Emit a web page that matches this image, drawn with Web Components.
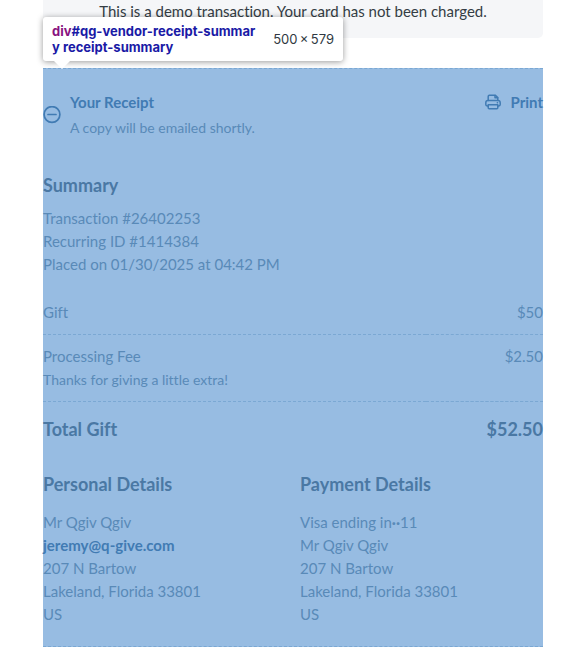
<!DOCTYPE html>
<html lang="en">
<head>
<meta charset="utf-8">
<meta name="viewport" content="width=device-width, initial-scale=1">
<title>Receipt</title>
<style>
  :root {
    --highlight: #97bce2;
    --text: #598ab8;
    --heading: #4a78a4;
    --link: #417bb3;
    --dash: #7ba8d3;
  }
  body {
    margin: 0;
    padding: 0 34px 8px 43px;
    background: #fff;
    font: 15px/23px Lato, "Liberation Sans", sans-serif;
    font-variant-ligatures: none;
    color: var(--text);
  }
</style>
</head>
<body>

<demo-notice>This is a demo transaction. Your card has not been charged.</demo-notice>

<receipt-summary>
  <inspect-tip slot="tip" tag="div" width="500" height="579">#qg-vendor-receipt-summar<br>y receipt-summary</inspect-tip>
  <receipt-header heading="Your Receipt">A copy will be emailed shortly.</receipt-header>
  <receipt-section heading="Summary">
    <div>Transaction #26402253</div>
    <div>Recurring ID #1414384</div>
    <div>Placed on 01/30/2025 at 04:42 PM</div>
  </receipt-section>
  <receipt-items></receipt-items>
  <receipt-columns>
    <receipt-section heading="Personal Details" roomy>
      <div>Mr Qgiv Qgiv</div>
      <div><receipt-link href="mailto:jeremy@q-give.com">jeremy@q-give.com</receipt-link></div>
      <div>207 N Bartow</div>
      <div>Lakeland, Florida 33801</div>
      <div>US</div>
    </receipt-section>
    <receipt-section heading="Payment Details" roomy>
      <div>Visa ending in<b>··</b>11</div>
      <div>Mr Qgiv Qgiv</div>
      <div>207 N Bartow</div>
      <div>Lakeland, Florida 33801</div>
      <div>US</div>
    </receipt-section>
  </receipt-columns>
</receipt-summary>

<script>
// Small helper: every element here is an open shadow root with static markup.
class BaseElement extends HTMLElement {
  connectedCallback() {
    if (this.shadowRoot) return;
    this.attachShadow({ mode: 'open' }).innerHTML = this.template();
  }
}

// Grey banner above the receipt
class DemoNotice extends BaseElement {
  template() {
    return `
      <style>
        :host {
          display: block;
          padding: 0 20px 15px;
          margin-bottom: 30px;
          border-radius: 0 0 5px 5px;
          background: #f5f6f8;
          color: #343d44;
          font-size: 15px;
          text-align: center;
        }
      </style>
      <slot></slot>
    `;
  }
}

// Highlighted receipt box
class ReceiptSummary extends BaseElement {
  template() {
    return `
      <style>
        :host {
          display: block;
          position: relative;
          padding: 20px 0;
          background: var(--highlight);
          border-top: 1px dashed var(--dash);
          border-bottom: 1px dashed var(--dash);
        }
      </style>
      <slot name="tip"></slot>
      <slot></slot>
    `;
  }
}

// Inspector tooltip, floats over the top left corner of the highlighted box
class InspectTip extends BaseElement {
  template() {
    return `
      <style>
        :host {
          position: absolute;
          left: 0;
          bottom: 100%;
          margin-bottom: 8px;
          width: 300px;
          box-sizing: border-box;
          display: flex;
          align-items: center;
          justify-content: space-between;
          padding: 6px 9px;
          border-radius: 3px;
          background: #fff;
          box-shadow: 0 1px 6px rgba(0, 0, 0, .4);
          font: 13px/16px Inter, "Liberation Sans", sans-serif;
          white-space: nowrap;
          color: #303942;
        }
        :host::after {
          content: '';
          position: absolute;
          top: 100%;
          left: 11px;
          border: 8px solid transparent;
          border-top-color: #fff;
          border-bottom: 0;
        }
        .node { font-weight: 700; color: #1a1aa6; }
        .tag { color: #881280; }
        .size { font-size: 13px; }
      </style>
      <span class="node"><span class="tag">${this.getAttribute('tag')}</span><slot></slot></span>
      <span class="size">${this.getAttribute('width')}&#8201;×&#8201;${this.getAttribute('height')}</span>
    `;
  }
}

// Title row with the collapse toggle and the print button
class ReceiptHeader extends BaseElement {
  template() {
    return `
      <style>
        :host {
          display: flex;
          align-items: flex-start;
          line-height: 26px;
        }
        button {
          padding: 0;
          border: 0;
          background: none;
          font: inherit;
          font-weight: 700;
          color: var(--link);
          cursor: pointer;
        }
        svg {
          display: block;
          fill: none;
          stroke: currentColor;
          stroke-linecap: round;
          stroke-linejoin: round;
        }
        .toggle { align-self: center; margin-right: 9px; }
        .text { flex: 1; }
        h2 {
          margin: 0;
          font-size: 15px;
          color: var(--link);
        }
        p { margin: 0; font-size: 14px; }
        .print {
          display: flex;
          align-items: center;
          gap: 9px;
        }
      </style>
      <button class="toggle" type="button" aria-label="Collapse receipt">
        <svg width="18" height="18" viewBox="0 0 18 18" stroke-width="1.7">
          <circle cx="9" cy="8.500" r="7.900"/>
          <path d="M5 8.500h8"/>
        </svg>
      </button>
      <div class="text">
        <h2>${this.getAttribute('heading')}</h2>
        <p><slot></slot></p>
      </div>
      <button class="print" type="button">
        <svg width="16" height="16" viewBox="0 0 16 16" stroke-width="1.5">
          <path d="M3.200 6.500V2.400q0-1.200 1.200-1.200h6l2.400 2.400v2.900"/>
          <path d="M10 1.400v2.400h2.600"/>
          <path d="M3.200 12H2.200Q.8 12 .8 10.600V8.700Q.8 6.500 3 6.500h10q2.200 0 2.200 2.200v1.900q0 1.400-1.400 1.400h-1"/>
          <path d="M3.200 10.800h9.600v3q0 1-1 1H4.200q-1 0-1-1z"/>
          <path d="M12.300 8.700h.2"/>
        </svg>
        Print
      </button>
    `;
  }
}

// Heading with lines of text under it
class ReceiptSection extends BaseElement {
  template() {
    return `
      <style>
        :host { display: block; margin-top: 31px; }
        h3 {
          margin: 0 0 9px;
          font-size: 18px;
          line-height: 26px;
          color: var(--heading);
        }
        :host([roomy]) { margin-top: 0; }
        :host([roomy]) h3 { margin-bottom: 14px; }
      </style>
      <h3>${this.getAttribute('heading')}</h3>
      <slot></slot>
    `;
  }
}

// Gift, fee and total
class ReceiptItems extends BaseElement {
  template() {
    return `
      <style>
        :host { display: block; margin: 15px 0 14px; }
        table { width: 100%; border-collapse: collapse; }
        th, td {
          padding: 10px 0;
          text-align: left;
          vertical-align: top;
          font-weight: 400;
        }
        td { text-align: right; }
        tbody tr { border-bottom: 1px dashed var(--dash); }
        small { display: block; font-size: 14px; }
        tfoot th, tfoot td {
          padding: 14px 0 15px;
          font-size: 18px;
          line-height: 26px;
          font-weight: 700;
          color: var(--heading);
        }
      </style>
      <table>
        <tbody>
          <tr><th scope="row">Gift</th><td>$50</td></tr>
          <tr><th scope="row">Processing Fee <small>Thanks for giving a little extra!</small></th><td>$2.50</td></tr>
        </tbody>
        <tfoot>
          <tr><th scope="row">Total Gift</th><td>$52.50</td></tr>
        </tfoot>
      </table>
    `;
  }
}

class ReceiptColumns extends BaseElement {
  template() {
    return `
      <style>
        :host {
          display: grid;
          grid-template-columns: 1fr 1fr;
          gap: 14px;
        }
      </style>
      <slot></slot>
    `;
  }
}

class ReceiptLink extends BaseElement {
  template() {
    return `
      <style>
        :host { display: inline; }
        a { color: var(--link); font-weight: 700; text-decoration: none; }
      </style>
      <a href="${this.getAttribute('href')}"><slot></slot></a>
    `;
  }
}

customElements.define('demo-notice', DemoNotice);
customElements.define('receipt-summary', ReceiptSummary);
customElements.define('inspect-tip', InspectTip);
customElements.define('receipt-header', ReceiptHeader);
customElements.define('receipt-section', ReceiptSection);
customElements.define('receipt-items', ReceiptItems);
customElements.define('receipt-columns', ReceiptColumns);
customElements.define('receipt-link', ReceiptLink);
</script>
</body>
</html>
